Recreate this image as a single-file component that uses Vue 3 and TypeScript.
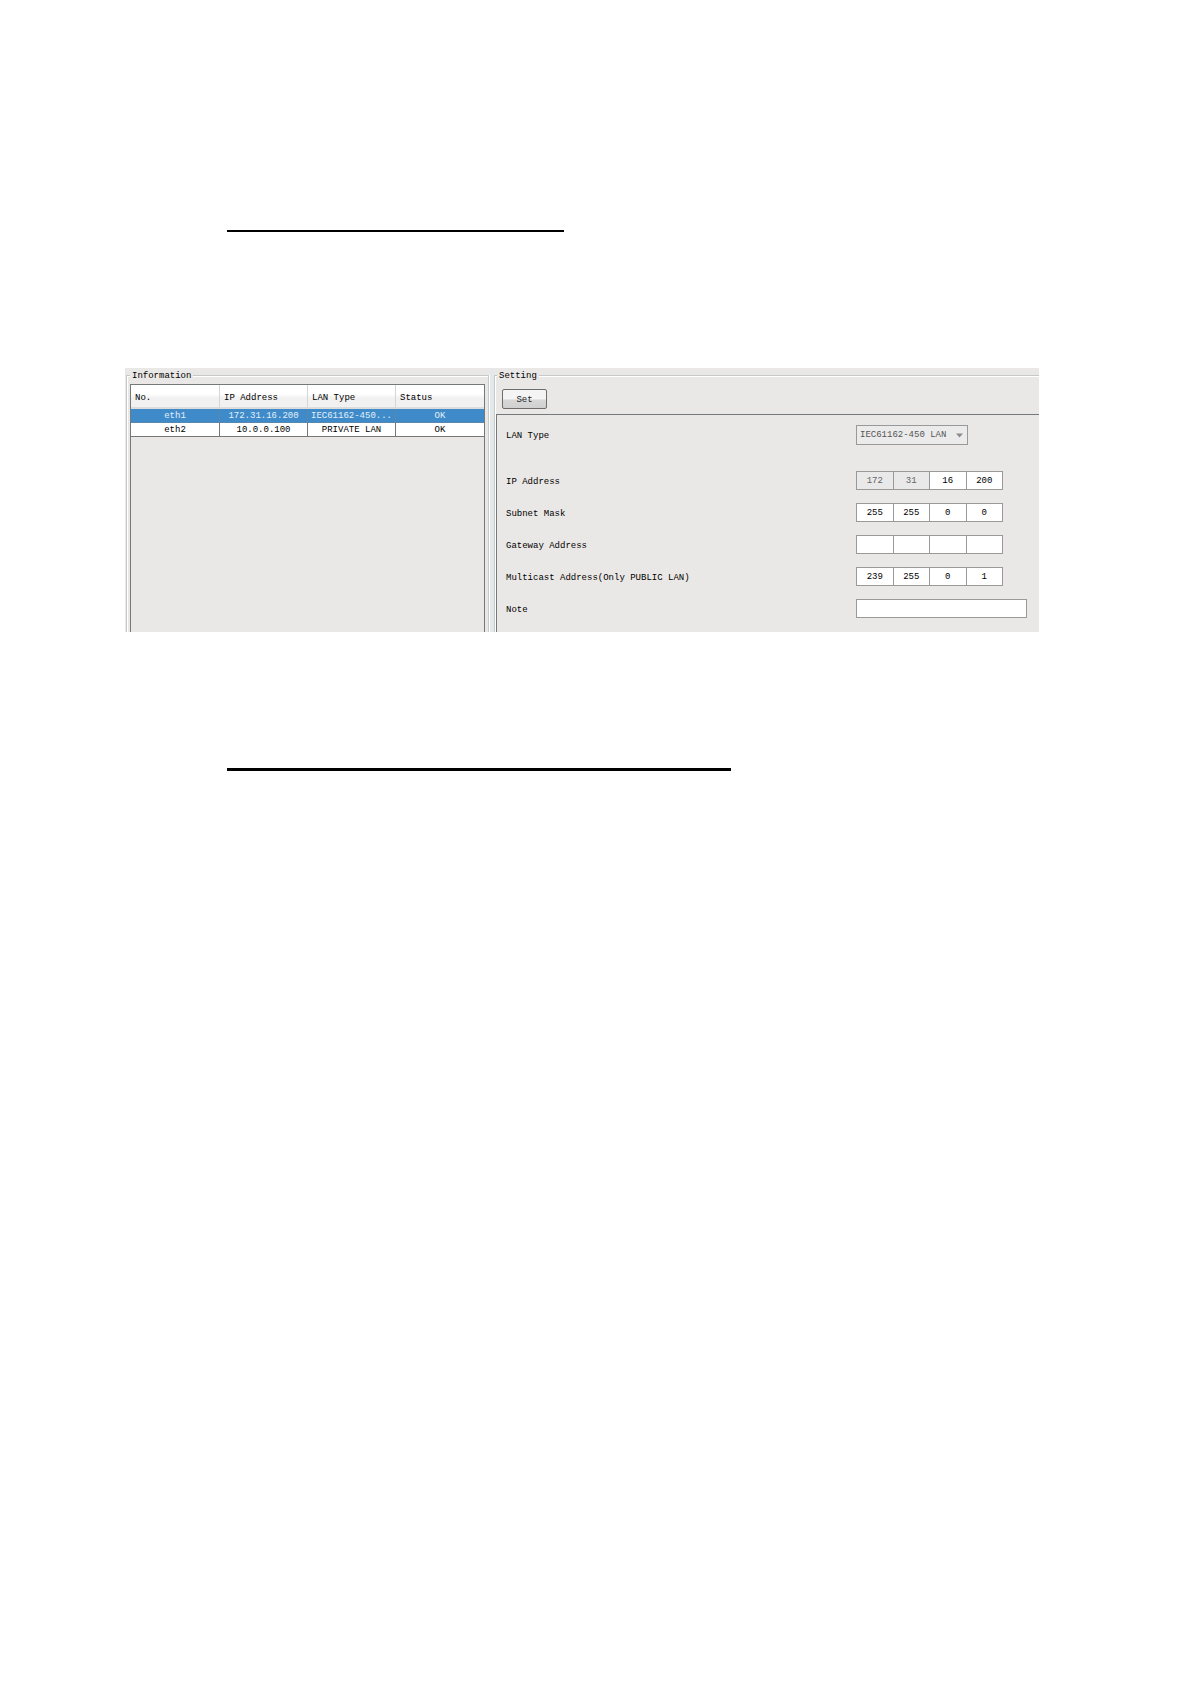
<script setup lang="ts">
interface Lan {
  no: string
  ip: string
  type: string
  status: string
  selected?: boolean
}

interface AddressRow {
  id: string
  label: string
  octets: string[]
  locked: number
}

const lans: Lan[] = [
  { no: 'eth1', ip: '172.31.16.200', type: 'IEC61162-450...', status: 'OK', selected: true },
  { no: 'eth2', ip: '10.0.0.100', type: 'PRIVATE LAN', status: 'OK' },
]

const rows: AddressRow[] = [
  { id: 'ip', label: 'IP Address', octets: ['172', '31', '16', '200'], locked: 2 },
  { id: 'mask', label: 'Subnet Mask', octets: ['255', '255', '0', '0'], locked: 0 },
  { id: 'gateway', label: 'Gateway Address', octets: ['', '', '', ''], locked: 0 },
  { id: 'multicast', label: 'Multicast Address(Only PUBLIC LAN)', octets: ['239', '255', '0', '1'], locked: 0 },
]
</script>

<template>
  <main class="page">
    <hr class="rule rule-first" />
    <div class="window">
      <fieldset class="group info">
        <legend>Information</legend>
        <div class="list">
          <table>
            <thead>
              <tr>
                <th scope="col">No.</th>
                <th scope="col">IP Address</th>
                <th scope="col">LAN Type</th>
                <th scope="col">Status</th>
              </tr>
            </thead>
            <tbody>
              <tr v-for="lan in lans" :key="lan.no" :class="{ selected: lan.selected }">
                <td>{{ lan.no }}</td>
                <td>{{ lan.ip }}</td>
                <td>{{ lan.type }}</td>
                <td>{{ lan.status }}</td>
              </tr>
            </tbody>
          </table>
        </div>
      </fieldset>
      <div class="splitter"></div>
      <fieldset class="group setting">
        <legend>Setting</legend>
        <div class="toolbar">
          <button type="button">Set</button>
        </div>
        <form class="form" @submit.prevent>
          <div class="row row-type">
            <label for="lan-type">LAN Type</label>
            <div class="field">
              <div class="select">
                <select id="lan-type" disabled>
                  <option>IEC61162-450 LAN</option>
                </select>
                <svg class="arrow" width="7" height="5" viewBox="0 0 7 5" aria-hidden="true">
                  <path d="M0 0.5H7L3.5 4.5Z" fill="#8c8c8c" />
                </svg>
              </div>
            </div>
          </div>
          <div v-for="row in rows" :key="row.id" class="row">
            <label :for="row.id + '-0'">{{ row.label }}</label>
            <div class="field">
              <div class="octets">
                <input
                  v-for="(octet, i) in row.octets"
                  :id="row.id + '-' + i"
                  :key="i"
                  type="text"
                  :value="octet"
                  :disabled="i < row.locked"
                  :aria-label="row.label + ' ' + (i + 1)"
                />
              </div>
            </div>
          </div>
          <div class="row">
            <label for="note">Note</label>
            <div class="field">
              <input id="note" class="note" type="text" />
            </div>
          </div>
        </form>
      </fieldset>
    </div>
    <hr class="rule rule-second" />
  </main>
</template>

<style>
body {
  margin: 0;
  background: #fff;
}
</style>

<style scoped>
.page,
.page * {
  box-sizing: border-box;
}

.page {
  padding: 230px 151px 0 125px;
  font: 9px/12px 'Liberation Mono', 'Noto Sans CJK SC', monospace;
  color: #000;
}

.rule {
  margin: 0 0 0 102px;
  border: 0;
  background: #000;
}

.rule-first {
  width: 337px;
  height: 2px;
}

.rule-second {
  width: 504px;
  height: 3px;
}

.window {
  display: grid;
  grid-template-columns: 363fr 5px 545fr;
  height: 264px;
  margin: 136px 0;
  padding: 0 0 0 1px;
  background: #eae8e6;
}

.group {
  min-width: 0;
  margin: 0;
  border: 1px solid #c6c9ca;
  border-bottom: 0;
  box-shadow: inset 1px 1px #fff, 1px 0 #fff;
}

legend {
  padding: 2px 2px 0;
  background: #eae8e6;
}

.info {
  padding: 2px 3px 0;
}

legend {
  margin-left: 1px;
}

.info legend {
  margin-left: 0;
}

.list {
  height: 248px;
  border: 1px solid #74797b;
  border-bottom: 0;
}

table {
  width: 100%;
  table-layout: fixed;
  border-collapse: separate;
  border-spacing: 0;
}

th {
  height: 24px;
  padding: 4px 4px 0;
  border-right: 1px solid #d5d5d5;
  border-bottom: 2px solid #dcdcdc;
  background: linear-gradient(#fff 40%, #f1f1f2 60%);
  font-weight: normal;
  text-align: left;
}

th:first-child {
  width: 89px;
}

td {
  height: 14px;
  padding: 1px 0 0;
  border-right: 1px solid #777;
  border-bottom: 1px solid #777;
  background: #fff;
  text-align: center;
  white-space: nowrap;
}

th:last-child,
td:last-child {
  border-right: 0;
}

.selected td {
  border-color: #5b87ad;
  background: #3f8bc9;
  color: #e3effa;
}

.splitter {
  margin-left: 1px;
  background: #e3e9ea;
}

.setting {
  padding: 0 0 0 1px;
  border-right: 0;
}

.toolbar {
  display: flex;
  height: 32px;
  padding: 7px 6px 0;
}

button {
  width: 45px;
  height: 20px;
  padding: 1px 0 0;
  border: 1px solid #6d6d6d;
  border-radius: 2px;
  background: linear-gradient(#f4f4f4 50%, #d8d8d8 55%, #d0d0d0);
  font: inherit;
  color: #222;
}

.form {
  height: 218px;
  padding: 10px 12px 0 9px;
  border: 1px solid #74797b;
  border-right: 0;
  border-bottom: 0;
}

.row {
  display: flex;
  align-items: center;
  justify-content: space-between;
  height: 19px;
  margin-bottom: 13px;
}

.row-type {
  height: 20px;
  margin-bottom: 26px;
}

label {
  padding-top: 2px;
}

.field {
  flex: 0 0 171px;
}

.octets {
  display: flex;
  width: 147px;
}

.select {
  position: relative;
  width: 112px;
}

.arrow {
  position: absolute;
  top: 8px;
  right: 5px;
}

select {
  display: block;
  width: 100%;
  height: 20px;
  padding: 0 3px;
  border: 1px solid #999;
  border-radius: 0;
  background: #ebebeb;
  appearance: none;
  font: inherit;
  color: #555;
  opacity: 1;
}

input {
  display: block;
  flex: 1;
  min-width: 0;
  height: 19px;
  padding: 1px 0 0;
  border: 1px solid #999;
  border-radius: 0;
  background: #fff;
  font: inherit;
  color: #000;
  text-align: center;
}

.octets input + input {
  margin-left: -1px;
}

input:disabled {
  background: #e9e9e9;
  color: #666;
}

.note {
  width: 100%;
  text-align: left;
}
</style>
